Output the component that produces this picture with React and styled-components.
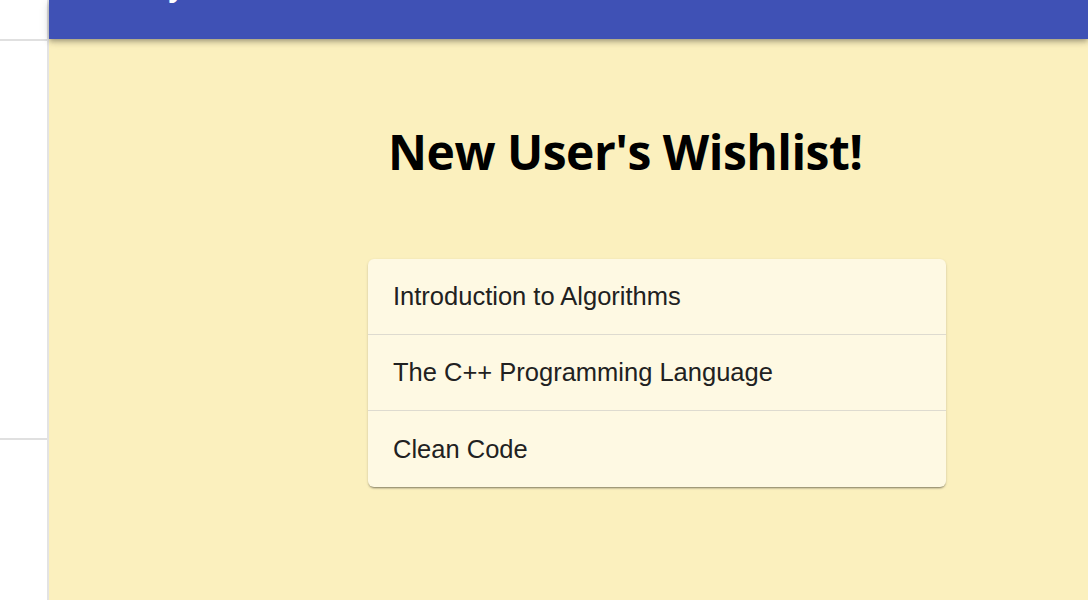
import React from "react";
import styled, { createGlobalStyle } from "styled-components";

const Global = createGlobalStyle`
  html, body { margin: 0; padding: 0; height: 100%; overflow: hidden; }
  body { font-family: "Liberation Sans", Arial, sans-serif; }
  #root { height: 100%; }
`;

const Layout = styled.div`
  display: flex;
  height: 600px;
  width: 1088px;
`;

const Sidebar = styled.aside`
  width: 47px;
  flex: none;
  background: #ffffff;
  border-right: 2px solid #e3e3e3;
  display: flex;
  flex-direction: column;
`;

const SideSection = styled.div`
  height: ${(p) => p.h}px;
  border-bottom: 2px solid #e0e0e0;
  flex: none;
`;

const Main = styled.main`
  flex: 1;
  display: flex;
  flex-direction: column;
  background: #fbf0be;
  min-width: 0;
`;

const AppBar = styled.header`
  height: 39px;
  flex: none;
  background: #3f51b5;
  box-shadow: 0 2px 4px -1px rgba(0,0,0,0.2), 0 4px 5px 0 rgba(0,0,0,0.14), 0 1px 10px 0 rgba(0,0,0,0.12);
  position: relative;
  z-index: 1;
  overflow: hidden;
  display: flex;
  align-items: flex-start;
  padding-left: 92px;
`;

const BarTitle = styled.div`
  color: #ffffff;
  font-family: "Open Sans", sans-serif;
  font-weight: 600;
  font-size: 30px;
  line-height: 1;
  margin-top: -30px;
`;

const Content = styled.div`
  flex: 1;
  display: flex;
  flex-direction: column;
  align-items: flex-start;
`;

const Title = styled.h1`
  margin: 81px 0 0 339px;
  font-family: "Open Sans", "Noto Sans", sans-serif;
  font-weight: 700;
  font-size: 48px;
  line-height: 64px;
  color: #000;
  letter-spacing: -0.5px;
`;

const Card = styled.ul`
  list-style: none;
  margin: 75px 0 0 319px;
  padding: 0;
  width: 578px;
  background: #fef9e3;
  border-radius: 6px;
  box-shadow: 0 2px 2px -1px rgba(0,0,0,0.4), 0 1px 3px 0 rgba(0,0,0,0.14);
  overflow: hidden;
`;

const Item = styled.li`
  box-sizing: border-box;
  display: flex;
  align-items: center;
  padding: 0 25px;
  font-family: "Liberation Sans", Arial, sans-serif;
  font-size: 25.5px;
  color: #212121;
  border-top: ${(p) => (p.$first ? "none" : "1px solid #dedbd0")};
  height: ${(p) => p.$h}px;
`;

const books = [
  { title: "Introduction to Algorithms", h: 75 },
  { title: "The C++ Programming Language", h: 76 },
  { title: "Clean Code", h: 77 },
];

export default function App() {
  return (
    <>
      <Global />
      <Layout>
        <Sidebar>
          <SideSection h={39} />
          <SideSection h={397} />
        </Sidebar>
        <Main>
          <AppBar>
            <BarTitle>My Books</BarTitle>
          </AppBar>
          <Content>
            <Title>New User's Wishlist!</Title>
            <Card>
              {books.map((b, i) => (
                <Item key={b.title} $first={i === 0} $h={b.h}>
                  {b.title}
                </Item>
              ))}
            </Card>
          </Content>
        </Main>
      </Layout>
    </>
  );
}
